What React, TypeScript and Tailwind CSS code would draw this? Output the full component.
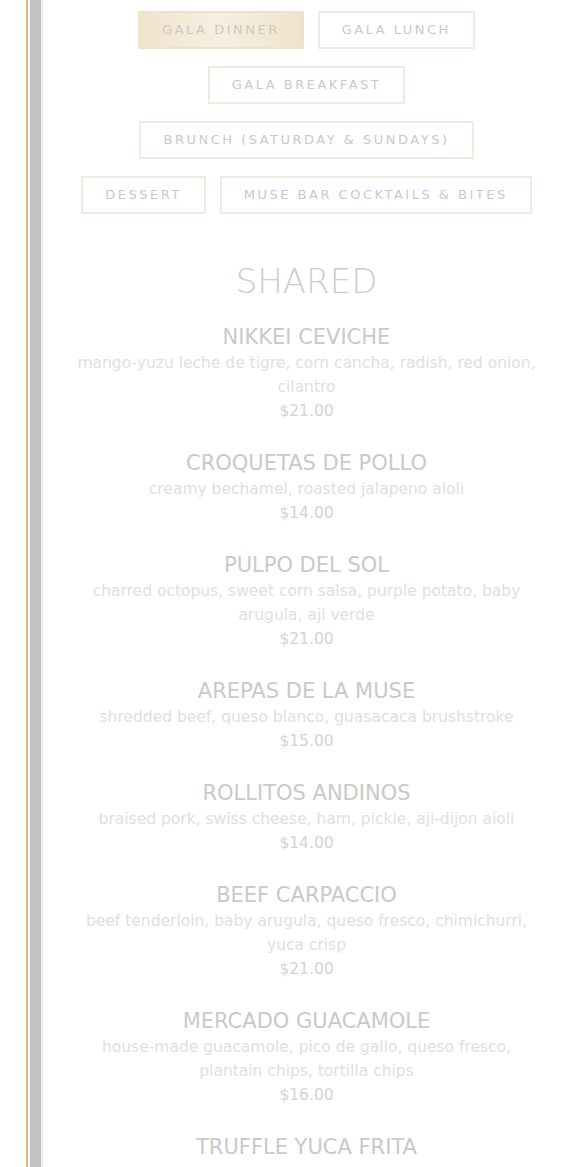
import React from 'react';

const tabs: { label: string; active?: boolean }[][] = [
  [{ label: 'Gala Dinner', active: true }, { label: 'Gala Lunch' }],
  [{ label: 'Gala Breakfast' }],
  [{ label: 'Brunch (Saturday & Sundays)' }],
  [{ label: 'Dessert' }, { label: 'Muse Bar Cocktails & Bites' }],
];

const dishes: { name: string; desc?: string; price?: string }[] = [
  { name: 'Nikkei Ceviche', desc: 'mango-yuzu leche de tigre, corn cancha, radish, red onion, cilantro', price: '$21.00' },
  { name: 'Croquetas de Pollo', desc: 'creamy bechamel, roasted jalapeno aioli', price: '$14.00' },
  { name: 'Pulpo del Sol', desc: 'charred octopus, sweet corn salsa, purple potato, baby arugula, aji verde', price: '$21.00' },
  { name: 'Arepas de la Muse', desc: 'shredded beef, queso blanco, guasacaca brushstroke', price: '$15.00' },
  { name: 'Rollitos Andinos', desc: 'braised pork, swiss cheese, ham, pickle, aji-dijon aioli', price: '$14.00' },
  { name: 'Beef Carpaccio', desc: 'beef tenderloin, baby arugula, queso fresco, chimichurri, yuca crisp', price: '$21.00' },
  { name: 'Mercado Guacamole', desc: 'house-made guacamole, pico de gallo, queso fresco, plantain chips, tortilla chips', price: '$16.00' },
  { name: 'Truffle Yuca Frita' },
];

function Tab({ label, active }: { label: string; active?: boolean }) {
  return (
    <button
      className={
        'h-[38px] border-2 px-[22px] text-[13px] uppercase tracking-[2.5px] text-[#ccc8ca] ' +
        (active
          ? 'border-[#ece3cf] bg-gradient-to-r from-[#efe4cc] via-[#f6efe0] to-[#efe4cc]'
          : 'border-[#f0ebdf] bg-white')
      }
    >
      {label}
    </button>
  );
}

export default function App() {
  return (
    <div className="flex h-[1167px] overflow-hidden bg-white font-['DejaVu_Sans',sans-serif]">
      {/* page edge rails */}
      <div className="w-[26px] shrink-0" />
      <div className="w-[2px] shrink-0 bg-[#dcbd74]" />
      <div className="w-[2px] shrink-0" />
      <div className="w-[11px] shrink-0 bg-[#c3c1c2]" />
      <div className="w-[2px] shrink-0 bg-[#ececec]" />

      <div className="flex-1">
        <div className="flex flex-col items-center gap-[17px] pt-[11px]">
          {tabs.map((row, i) => (
            <div key={i} className="flex gap-[14px]">
              {row.map((t) => (
                <Tab key={t.label} label={t.label} active={t.active} />
              ))}
            </div>
          ))}
        </div>

        <h2 className="mt-[47px] text-center text-[34px] leading-[40px] font-light text-[#cdcdcd]">SHARED</h2>

        <div className="mt-[22px] flex flex-col gap-[26px] px-[30px] text-center">
          {dishes.map((d) => (
            <div key={d.name}>
              <h3 className="text-[21px] leading-[28px] uppercase text-[#c9c9c9]">{d.name}</h3>
              {d.desc && <p className="text-[15.5px] leading-[24px] text-[#e0e0e0]">{d.desc}</p>}
              {d.price && <p className="text-[15.5px] leading-[24px] text-[#d3d3d3]">{d.price}</p>}
            </div>
          ))}
        </div>
      </div>
    </div>
  );
}
